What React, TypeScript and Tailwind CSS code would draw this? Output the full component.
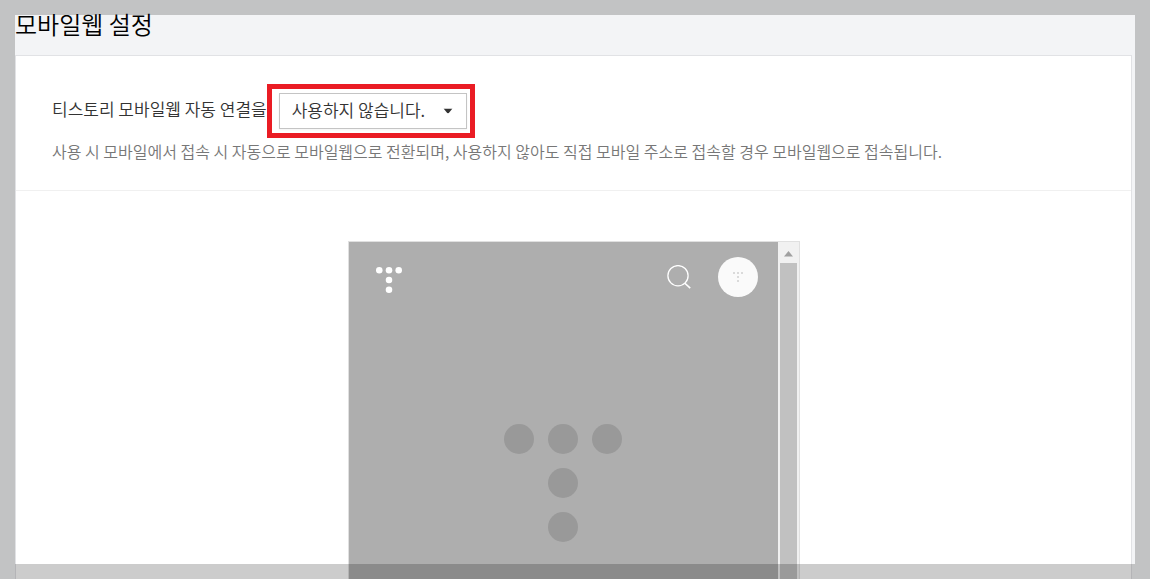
import { useState } from "react";

interface DotLogoProps {
  className: string;
  radius: number;
  gap: number;
}

// Five dots arranged as a "T"
function DotLogo({ className, radius, gap }: DotLogoProps) {
  const size = gap * 2 + radius * 2;
  const dots = [
    [0, 0],
    [1, 0],
    [2, 0],
    [1, 1],
    [1, 2],
  ];

  return (
    <svg className={className} viewBox={`0 0 ${size} ${size}`} aria-hidden="true">
      {dots.map(([x, y]) => (
        <circle
          key={`${x}-${y}`}
          cx={radius + x * gap}
          cy={radius + y * gap}
          r={radius}
          fill="currentColor"
        />
      ))}
    </svg>
  );
}

function SearchIcon() {
  return (
    <svg
      className="size-6"
      viewBox="0 0 24 24"
      fill="none"
      stroke="currentColor"
      strokeWidth="1.3"
      aria-hidden="true"
    >
      <circle cx="11" cy="10.7" r="10.1" />
      <path d="M17.6 18 L23.2 23.2" strokeWidth="1.6" />
    </svg>
  );
}

function AutoConnectSelect() {
  const [value, setValue] = useState("off");

  return (
    <div className="relative">
      <select
        id="auto-connect"
        value={value}
        onChange={(e) => setValue(e.target.value)}
        className="block h-9 w-[188px] appearance-none rounded-none border border-[#c4c4c4] bg-white pb-0.5 pl-3 pr-8 text-[17px] text-[#333] shadow-xs outline-none"
      >
        <option value="off">사용하지 않습니다.</option>
        <option value="on">사용합니다.</option>
      </select>
      <svg
        className="pointer-events-none absolute right-3.5 top-1/2 h-[5px] w-[10px] -translate-y-1/2"
        viewBox="0 0 10 5"
        aria-hidden="true"
      >
        <path d="M0.5 0 H9.5 L5.8 4.6 Q5 5.3 4.2 4.6 Z" fill="#333" />
      </svg>
      {/* highlight frame around the drop-down */}
      <div className="pointer-events-none absolute -inset-y-[9px] -left-3 -right-2 border-5 border-[#ea1c24]" />
    </div>
  );
}

function MobilePreview() {
  return (
    <section className="flex w-[452px] flex-1 border border-b-0 border-[#e0e0e0]">
      <div className="flex-1 bg-[#aeaeae]">
        <div className="flex items-start pl-[27px] pr-5 pt-[15px] text-white">
          <DotLogo className="mt-2.5 size-[26px]" radius={3.2} gap={9.5} />
          <button type="button" aria-label="검색" className="ml-auto mr-[27px] mt-2">
            <SearchIcon />
          </button>
          <button
            type="button"
            aria-label="프로필"
            className="flex size-10 items-center justify-center rounded-full bg-[#fafafa] text-[#cfcfcf]"
          >
            <DotLogo className="size-[10px]" radius={1} gap={4} />
          </button>
        </div>
        <DotLogo
          className="mx-auto mt-[127px] size-[118px] text-[#999]"
          radius={15}
          gap={44}
        />
      </div>
      <div className="flex w-[21px] flex-col items-center bg-[#f1f1f1]">
        <svg className="mb-1.5 mt-[9px] h-1.5 w-[9px]" viewBox="0 0 9 6" aria-hidden="true">
          <path d="M0 5.5 L4.5 0 L9 5.5 Z" fill="#a0a0a0" />
        </svg>
        <div className="w-[17px] flex-1 bg-[#c1c1c1]" />
      </div>
    </section>
  );
}

export default function App() {
  return (
    <main className="flex h-screen flex-col overflow-hidden bg-[#f3f4f6] pl-[15px] pr-[18px] font-['Noto_Sans_CJK_KR',sans-serif] font-[350]">
      <h1 className="h-[55px] pt-2 text-2xl font-[350] leading-8 text-black">모바일웹 설정</h1>

      <div className="flex flex-1 flex-col border border-b-0 border-[#e1e2e5] bg-white">
        <div className="border-b border-[#f0f0f0] px-9 pb-[27px] pt-[37px]">
          <div className="flex items-start gap-3">
            <label htmlFor="auto-connect" className="text-[17px] leading-8 text-[#333]">
              티스토리 모바일웹 자동 연결을
            </label>
            <AutoConnectSelect />
          </div>
          <p className="mt-2.5 text-base text-[#777]">
            사용 시 모바일에서 접속 시 자동으로 모바일웹으로 전환되며, 사용하지 않아도
            직접 모바일 주소로 접속할 경우 모바일웹으로 접속됩니다.
          </p>
        </div>
        <div className="flex flex-1 flex-col items-center pt-[50px]">
          <MobilePreview />
        </div>
      </div>

      {/* dimmed edge around the window */}
      <div className="pointer-events-none fixed inset-0 border-15 border-black/20" />
    </main>
  );
}
